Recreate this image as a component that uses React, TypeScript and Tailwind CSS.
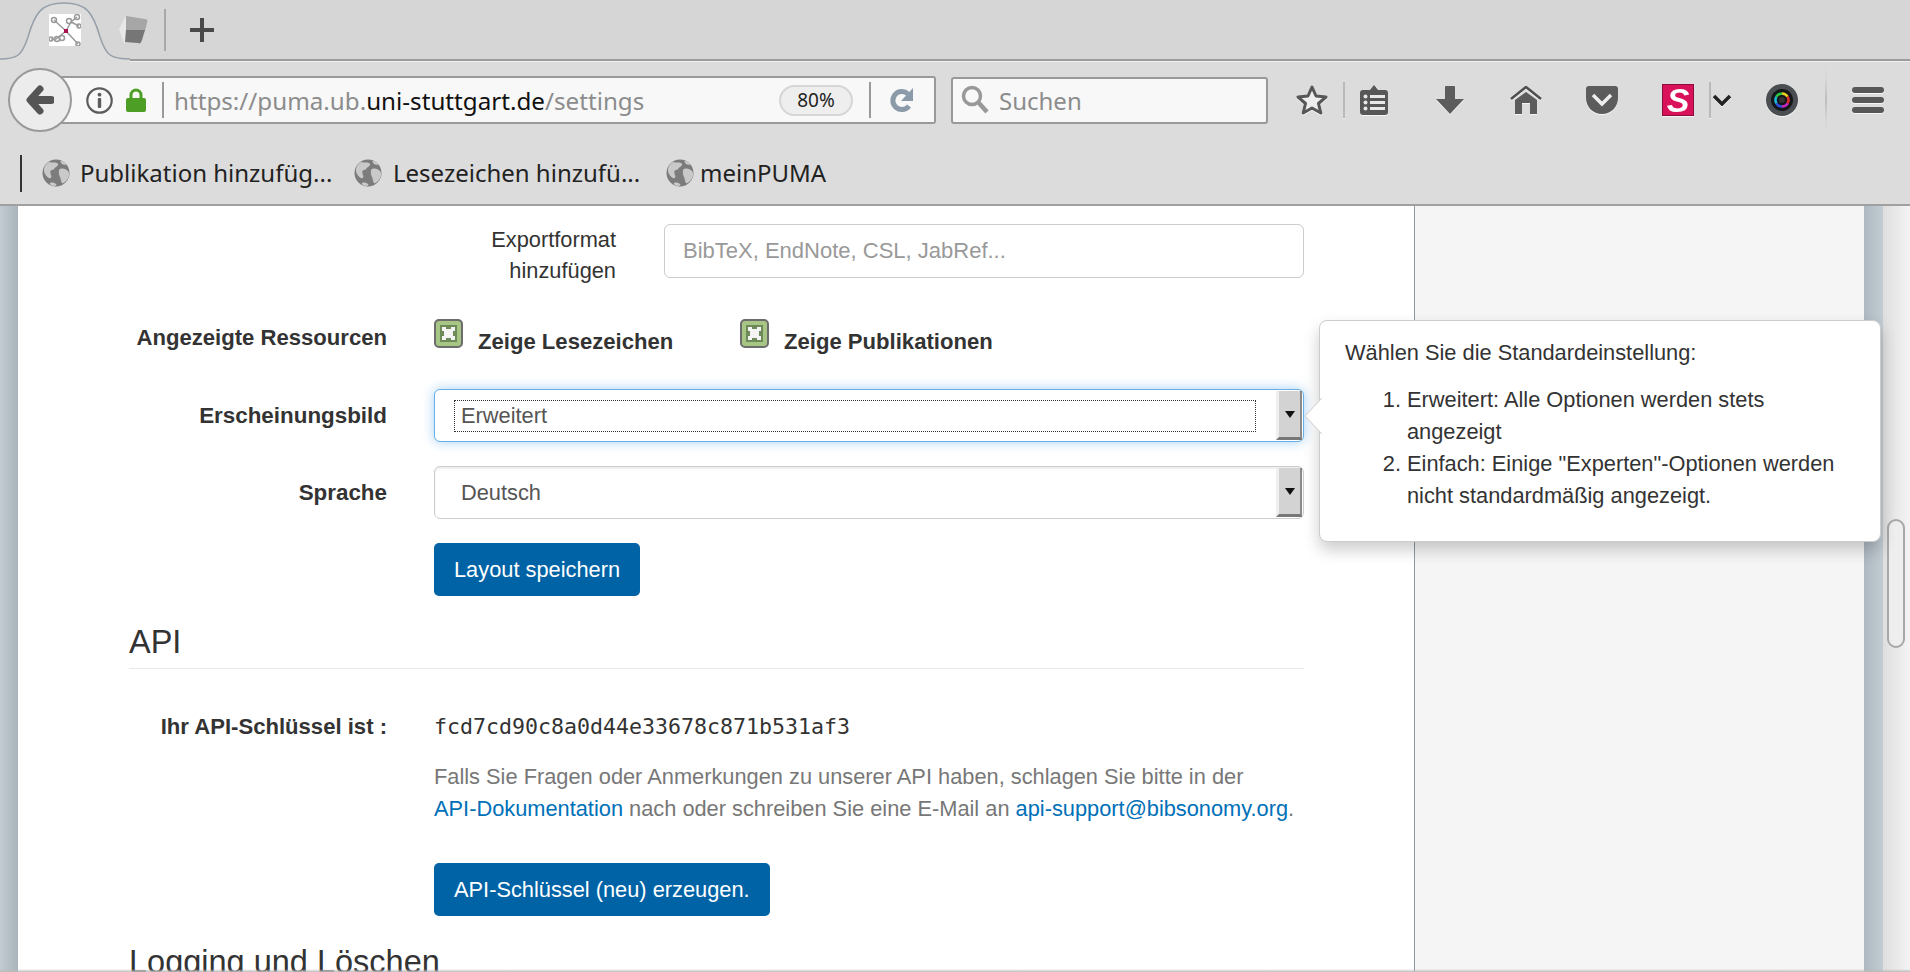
import type { ReactNode } from 'react'

const UI = "font-['Noto_Sans',sans-serif]"

const Globe = () => (
  <svg width="28" height="28" viewBox="0 0 28 28" className="shrink-0">
    <circle cx="14" cy="14" r="13.5" fill="#7c7c7c" />
    <path d="M7 3c3 1 6 0 8 1s1 3-1 4-2 3-4 3-2 3-1 5 0 4-2 3-5-4-5-8 3-7 5-8Z" fill="#c9c9c9" />
    <path d="M18 10c3-1 6 0 8 2s1 7-1 9-4 4-5 3-1-4-2-6-2-7 0-8ZM19 2c2 0 4 2 5 3s-3 1-4 0-2-3-1-3ZM8 24c2-1 5 0 6 1s0 2-2 2-5-2-4-3Z" fill="#c9c9c9" />
  </svg>
)

const Bookmark = ({ label, className }: { label: string; className: string }) => (
  <div className={`flex items-center ${className}`}>
    <Globe />
    <span className="text-[24px] leading-none whitespace-nowrap text-[#222]">{label}</span>
  </div>
)

const Favicon = () => (
  <svg width="32" height="32" viewBox="0 0 32 32" className="shrink-0">
    <rect width="32" height="32" fill="#fff" />
    <g stroke="#9a9a9a" strokeWidth="1.5" fill="none">
      <path d="M17 17 5 6M17 17 29 30M17 17 7 25H2M17 17 22 8l6-5M22 8l8 4" />
      <circle cx="5" cy="6" r="2.500" />
      <circle cx="20" cy="7" r="2.500" />
      <circle cx="28" cy="3" r="2.500" />
      <circle cx="30" cy="12" r="2" />
      <circle cx="2" cy="25" r="2" />
      <circle cx="8" cy="25" r="2.500" />
      <circle cx="13" cy="24" r="2.500" />
      <circle cx="29" cy="30" r="2" />
    </g>
    <rect x="15" y="15" width="4" height="4" fill="#a8134f" />
  </svg>
)

const Cube = () => (
  <svg width="30" height="30" viewBox="0 0 30 30" className="shrink-0">
    <path d="M1 14 7 2h2l-2 26h-1Z" fill="#e8e8e8" />
    <path d="M8 1 27 4c2 0 3 2 2 4l-2 8H8Z" fill="#a6a6a6" />
    <path d="M8 15h19l-3 10c-1 3-2 4-4 3L7 27Z" fill="#767676" />
  </svg>
)

const ToolSep = ({ className }: { className: string }) => <div className={`h-[36px] w-[2px] shrink-0 bg-[#b9b9b9] ${className}`} />

const Select = ({ value, focused }: { value: string; focused?: boolean }) => (
  <div
    className={`flex h-[53px] w-[870px] items-center rounded-[6px] border bg-white ${
      focused ? 'border-[#66afe9] shadow-[0_0_12px_rgba(102,175,233,0.6)]' : 'border-[#ccc] shadow-[inset_0_2px_2px_rgba(0,0,0,0.07)]'
    }`}
  >
    <div className="flex min-w-0 flex-1 items-center pl-[19px]">
      {focused ? (
        <div className="flex h-[32px] w-[802px] items-center border border-dotted border-[#333] pl-[6px] text-[#555]">{value}</div>
      ) : (
        <div className="pl-[7px] text-[#555]">{value}</div>
      )}
    </div>
    <div className="mr-[1px] flex h-[49px] w-[26px] items-center justify-center border-r-2 border-b-[3px] border-l-[3px] border-r-[#8a8a8a] border-b-[#777] border-l-[#efefef] bg-[#d3d3d3]">
      <svg width="10" height="7" viewBox="0 0 10 7">
        <path d="M0 0h10L5 7Z" fill="#111" />
      </svg>
    </div>
  </div>
)

const Check = () => (
  <svg width="29" height="29" viewBox="0 0 29 29" className="shrink-0">
    <rect x="1" y="1" width="27" height="27" rx="4" fill="#a7c585" stroke="#6c6c6c" strokeWidth="2" />
    <rect x="6" y="6" width="17" height="17" fill="#6f8a59" />
    <path d="M8 8h4v2h5V8h4v4h-2v5h2v4h-4v-2h-5v2H8v-4h2v-5H8Z" fill="#f4f4f4" />
  </svg>
)

const Primary = ({ children, className }: { children: ReactNode; className: string }) => (
  <div className={`flex h-[53px] items-center rounded-[5px] bg-[#0063a6] px-[20px] text-white ${className}`}>{children}</div>
)

export default function App() {
  return (
    <div className="relative flex h-[972px] w-[1910px] flex-col overflow-hidden bg-white">
      <header className={`${UI} shrink-0 bg-[#dcdcdc]`}>
        {/* tab strip */}
        <div className="flex h-[59px] items-center bg-[#d6d6d6]">
          <div className="relative flex h-[59px] w-[128px] items-center justify-center pl-[2px]">
            <svg width="130" height="62" viewBox="0 0 130 62" className="absolute top-0 left-0">
              <path d="M0 59c18 0 22-4 28-22C35 12 42 3 64 3s29 9 36 34c6 18 10 22 30 22v3H0Z" fill="#dcdcdc" />
              <path d="M0 59c18 0 22-4 28-22C35 12 42 3 64 3s29 9 36 34c6 18 10 22 30 22" fill="none" stroke="#96a0aa" strokeWidth="1.5" />
            </svg>
            <div className="relative">
              <Favicon />
            </div>
          </div>
          <div className="-ml-[10px]">
            <Cube />
          </div>
          <div className="ml-[16px] h-[42px] w-[2px] bg-[#a8a8a8]" />
          <svg width="24" height="24" viewBox="0 0 24 24" className="ml-[24px]">
            <path d="M10 0h4v10h10v4H14v10h-4V14H0v-4h10Z" fill="#4a4a4a" />
          </svg>
        </div>
        <div className="h-[3px] border-t-2 border-[#9c9c9c] bg-[#eee]" />

        {/* nav bar */}
        <div className="flex h-[76px] items-center">
          <div className="relative z-10 ml-[8px] flex h-[64px] w-[64px] shrink-0 items-center justify-center rounded-full border-2 border-[#999] bg-[#ececec]">
            <svg width="28" height="30" viewBox="0 0 28 30">
              <path d="M14 4 4 15l10 11" fill="none" stroke="#555" strokeWidth="7" strokeLinecap="round" strokeLinejoin="round" />
              <path d="M7 15h18" stroke="#555" strokeWidth="8" strokeLinecap="round" />
            </svg>
          </div>
          <div className="-ml-[12px] flex h-[48px] w-[876px] shrink-0 items-center rounded-r-[3px] border-2 border-l-0 border-[#999] bg-[#f8f8f8]">
            <svg width="27" height="27" viewBox="0 0 27 27" className="ml-[26px] shrink-0">
              <circle cx="13.5" cy="13.5" r="12.2" fill="none" stroke="#5c5c5c" strokeWidth="2.2" />
              <circle cx="13.5" cy="7.7" r="1.9" fill="#5c5c5c" />
              <rect x="11.8" y="11" width="3.4" height="10" rx="1" fill="#5c5c5c" />
            </svg>
            <svg width="20" height="24" viewBox="0 0 20 24" className="ml-[13px] shrink-0">
              <path d="M5 11V7a5 5 0 0 1 10 0v4" fill="none" stroke="#4d9e25" strokeWidth="3" />
              <rect y="10" width="20" height="14" rx="2" fill="#4d9e25" />
            </svg>
            <div className="ml-[16px] h-[36px] w-[2px] shrink-0 bg-[#999]" />
            <div className="ml-[10px] flex-1 pt-[2px] text-[24.2px] leading-none whitespace-nowrap text-[#8c8c8c]">
              https://puma.ub.<span className="text-[#111]">uni-stuttgart.de</span>/settings
            </div>
            <div className="flex h-[31px] w-[74px] shrink-0 items-center justify-center rounded-full border-2 border-[#d6d6d6] bg-[#eee] text-[19px] leading-none text-[#222]">
              80%
            </div>
            <div className="ml-[16px] h-[36px] w-[2px] shrink-0 bg-[#999]" />
            <svg width="26" height="26" viewBox="0 0 26 26" className="mr-[19px] ml-[18px] shrink-0">
              <path d="M20 19a9 9 0 1 1-1-12" fill="none" stroke="#8b9aa8" strokeWidth="5" />
              <path d="M24 1v13H12Z" fill="#8b9aa8" />
            </svg>
          </div>
          <div className="ml-[15px] flex h-[47px] w-[317px] shrink-0 items-center rounded-[3px] border-2 border-[#999] bg-[#f8f8f8]">
            <svg width="28" height="30" viewBox="0 0 28 30" className="ml-[8px] shrink-0">
              <circle cx="11" cy="11" r="8.5" fill="none" stroke="#999" strokeWidth="3.5" />
              <path d="m17 17 9 10" stroke="#999" strokeWidth="4.5" />
            </svg>
            <span className="ml-[10px] pt-[2px] text-[24px] leading-none text-[#8c8c8c]">Suchen</span>
          </div>

          <div className="flex items-center drop-shadow-[0_1px_0_rgba(255,255,255,0.7)]">
            <svg width="32" height="32" viewBox="0 0 32 32" className="ml-[28px] shrink-0">
              <path d="m16 3 4 9 10 1-7.500 6.500L24.800 29 16 24l-8.800 5 2.300-9.500L2 13l10-1Z" fill="#eee" stroke="#575757" strokeWidth="3" strokeLinejoin="round" />
            </svg>
            <ToolSep className="ml-[15px]" />
            <svg width="28" height="30" viewBox="0 0 28 30" className="ml-[15px] shrink-0">
              <path d="M3 5h7l4-5 4 5h7a3 3 0 0 1 3 3v19a3 3 0 0 1-3 3H3a3 3 0 0 1-3-3V8a3 3 0 0 1 3-3Z" fill="#575757" />
              <path d="M10 10h15v3H10ZM10 16h15v3H10ZM10 22h15v3H10Z" fill="#e8e8e8" />
              <circle cx="5.500" cy="11.500" r="2" fill="#e8e8e8" />
              <circle cx="5.500" cy="17.500" r="2" fill="#e8e8e8" />
              <circle cx="5.500" cy="23.500" r="2" fill="#e8e8e8" />
            </svg>
            <svg width="28" height="28" viewBox="0 0 28 28" className="ml-[48px] shrink-0">
              <path d="M9 1a1 1 0 0 1 1-1h8a1 1 0 0 1 1 1v12h9L14 28 0 13h9Z" fill="#5c5c5c" />
            </svg>
            <svg width="32" height="28" viewBox="0 0 32 28" className="ml-[46px] shrink-0">
              <path d="M1 13 16 1l15 12" fill="none" stroke="#4f4f4f" strokeWidth="2.500" />
              <path d="M16 6 27 14v14h-7V17h-8v11H5V14Z" fill="#5c5c5c" />
            </svg>
            <svg width="32" height="28" viewBox="0 0 32 28" className="ml-[44px] shrink-0">
              <path d="M3 0h26a3 3 0 0 1 3 3v9c0 9-7 16-16 16S0 21 0 12V3a3 3 0 0 1 3-3Z" fill="#5c5c5c" />
              <path d="m7 9 9 9 9-9" fill="none" stroke="#eee" strokeWidth="3.500" />
            </svg>
            <div className="ml-[44px] flex h-[32px] w-[32px] shrink-0 items-center justify-center border border-[#8e0c3a] bg-[#d9105a] font-['Liberation_Sans',sans-serif] text-[34px] leading-none font-bold text-white italic">
              S
            </div>
            <ToolSep className="ml-[15px]" />
            <svg width="20" height="12" viewBox="0 0 20 12" className="ml-[1px] shrink-0">
              <path d="m2 2 8 8 8-8" fill="none" stroke="#222" strokeWidth="3.500" />
            </svg>
            <svg width="32" height="32" viewBox="0 0 32 32" className="ml-[34px] shrink-0">
              <circle cx="16" cy="16" r="16" fill="#4a4d52" />
              <circle cx="16" cy="16" r="11" fill="#14161a" />
              <g fill="none" strokeWidth="2.500">
                <path d="M16 9.500a6.500 6.500 0 0 1 5.600 3.200" stroke="#e8d020" />
                <path d="M21.600 12.700a6.500 6.500 0 0 1 0 6.600" stroke="#e02c2c" />
                <path d="M21.600 19.300a6.500 6.500 0 0 1-5.600 3.200" stroke="#c828c0" />
                <path d="M16 22.500a6.500 6.500 0 0 1-5.600-3.200" stroke="#3050e0" />
                <path d="M10.400 19.300a6.500 6.500 0 0 1 0-6.600" stroke="#20b8d8" />
                <path d="M10.400 12.700a6.500 6.500 0 0 1 5.600-3.200" stroke="#30c840" />
              </g>
              <circle cx="16" cy="16" r="3" fill="#333" />
            </svg>
            <div className="ml-[27px] h-[70px] w-[2px] shrink-0 bg-gradient-to-b from-transparent via-[#bcbcbc] to-transparent" />
            <div className="ml-[25px] flex w-[32px] shrink-0 flex-col gap-[4px]">
              <div className="h-[6px] rounded-full bg-[#575757]" />
              <div className="h-[6px] rounded-full bg-[#575757]" />
              <div className="h-[6px] rounded-full bg-[#575757]" />
            </div>
          </div>
        </div>

        {/* bookmarks */}
        <div className="flex h-[66px] items-center pt-[4px] pl-[20px]">
          <div className="h-[37px] w-[2px] shrink-0 bg-[#333]" />
          <Bookmark label="Publikation hinzufüg..." className="ml-[20px] w-[310px] gap-[10px]" />
          <Bookmark label="Lesezeichen hinzufü..." className="ml-[2px] w-[308px] gap-[11px]" />
          <Bookmark label="meinPUMA" className="ml-[4px] gap-[6px]" />
        </div>
        <div className="h-[2px] bg-[#a0a0a0]" />
      </header>

      {/* page */}
      <div className="flex min-h-0 flex-1 font-['Liberation_Sans',sans-serif] text-[21.8px] leading-[32px] text-[#333]">
        <div className="w-[18px] shrink-0 bg-gradient-to-r from-[#c3ccd2] to-[#a9b3bb]" />
        <main className="w-[1397px] shrink-0 overflow-hidden border-r border-[#8d99a6] bg-white pt-[18px] pl-[111px]">
          <div className="w-[1175px]">
            <div className="flex">
              <div className="w-[487px] shrink-0 text-right leading-[31px]">
                Exportformat
                <br />
                hinzufügen
              </div>
              <div className="ml-[48px] flex h-[54px] flex-1 items-center rounded-[6px] border border-[#ccc] pl-[18px] text-[22px] text-[#999]">BibTeX, EndNote, CSL, JabRef...</div>
            </div>

            <div className="mt-[33px] flex">
              <div className="w-[258px] shrink-0 pt-[3px] text-right text-[22.1px] font-bold">Angezeigte Ressourcen</div>
              <div className="ml-[47px] flex">
                <Check />
                <span className="mt-[7px] ml-[15px] w-[262px] text-[22.1px] font-bold">Zeige Lesezeichen</span>
                <Check />
                <span className="mt-[7px] ml-[15px] text-[22.1px] font-bold">Zeige Publikationen</span>
              </div>
            </div>

            <div className="mt-[31px] flex items-center">
              <div className="w-[258px] shrink-0 text-right text-[22.4px] font-bold">Erscheinungsbild</div>
              <div className="ml-[47px]">
                <Select value="Erweitert" focused />
              </div>
            </div>
            <div className="mt-[24px] flex items-center">
              <div className="w-[258px] shrink-0 text-right text-[22.4px] font-bold">Sprache</div>
              <div className="ml-[47px]">
                <Select value="Deutsch" />
              </div>
            </div>
            <div className="mt-[24px] pl-[305px]">
              <Primary className="w-fit">Layout speichern</Primary>
            </div>

            <div className="mt-[26px] border-b border-[#e8e8e8] pb-[6px] text-[32.5px] leading-[40px]">API</div>

            <div className="mt-[42px] flex">
              <div className="w-[258px] shrink-0 text-right text-[22.1px] font-bold">Ihr API-Schlüssel ist :</div>
              <code className="ml-[47px] font-['DejaVu_Sans_Mono',monospace] text-[21.6px]">fcd7cd90c8a0d44e33678c871b531af3</code>
            </div>
            <div className="mt-[18px] pl-[305px] text-[#777]">
              <p>Falls Sie Fragen oder Anmerkungen zu unserer API haben, schlagen Sie bitte in der</p>
              <p className="whitespace-nowrap">
                <span className="text-[#0070b8]">API-Dokumentation</span> nach oder schreiben Sie eine E-Mail an{' '}
                <span className="text-[#0070b8]">api-support@bibsonomy.org</span>.
              </p>
            </div>
            <div className="mt-[38px] pl-[305px]">
              <Primary className="w-fit">API-Schlüssel (neu) erzeugen.</Primary>
            </div>
            <div className="mt-[26px] text-[32.5px] leading-[40px]">Logging und Löschen</div>
          </div>
        </main>
        <aside className="w-[449px] shrink-0 bg-[#f5f5f5]" />
        <div className="w-[19px] shrink-0 bg-gradient-to-r from-[#adb8c2] to-[#c3ccd2]" />
        <div className="w-[27px] shrink-0 bg-gradient-to-r from-[#dedede] to-[#f4f4f4] pt-[313px] pl-[4px]">
          <div className="h-[129px] w-[18px] rounded-full border-2 border-[#a8a8a8] bg-[#eee]" />
        </div>
      </div>

      {/* popover */}
      <div className="absolute top-[320px] left-[1319px] h-[222px] w-[562px] rounded-[8px] border border-[#ccc] bg-white pt-[16px] pr-[24px] pl-[25px] font-['Liberation_Sans',sans-serif] text-[21.8px] leading-[32px] text-[#333] shadow-[0_8px_16px_rgba(0,0,0,0.2)]">
        <svg width="18" height="36" viewBox="0 0 18 36" className="absolute top-[77px] -left-[16px]">
          <path d="M18 0 1 18l17 18Z" fill="#fff" />
          <path d="M18 0 1 18l17 18" fill="none" stroke="#ccc" />
        </svg>
        <p>Wählen Sie die Standardeinstellung:</p>
        <ol className="mt-[15px] list-decimal pl-[62px]">
          <li>Erweitert: Alle Optionen werden stets angezeigt</li>
          <li>Einfach: Einige "Experten"-Optionen werden nicht standardmäßig angezeigt.</li>
        </ol>
      </div>

      <div className="absolute right-0 bottom-0 left-0 h-[3px] bg-gradient-to-b from-transparent to-[#bbb]" />
    </div>
  )
}
